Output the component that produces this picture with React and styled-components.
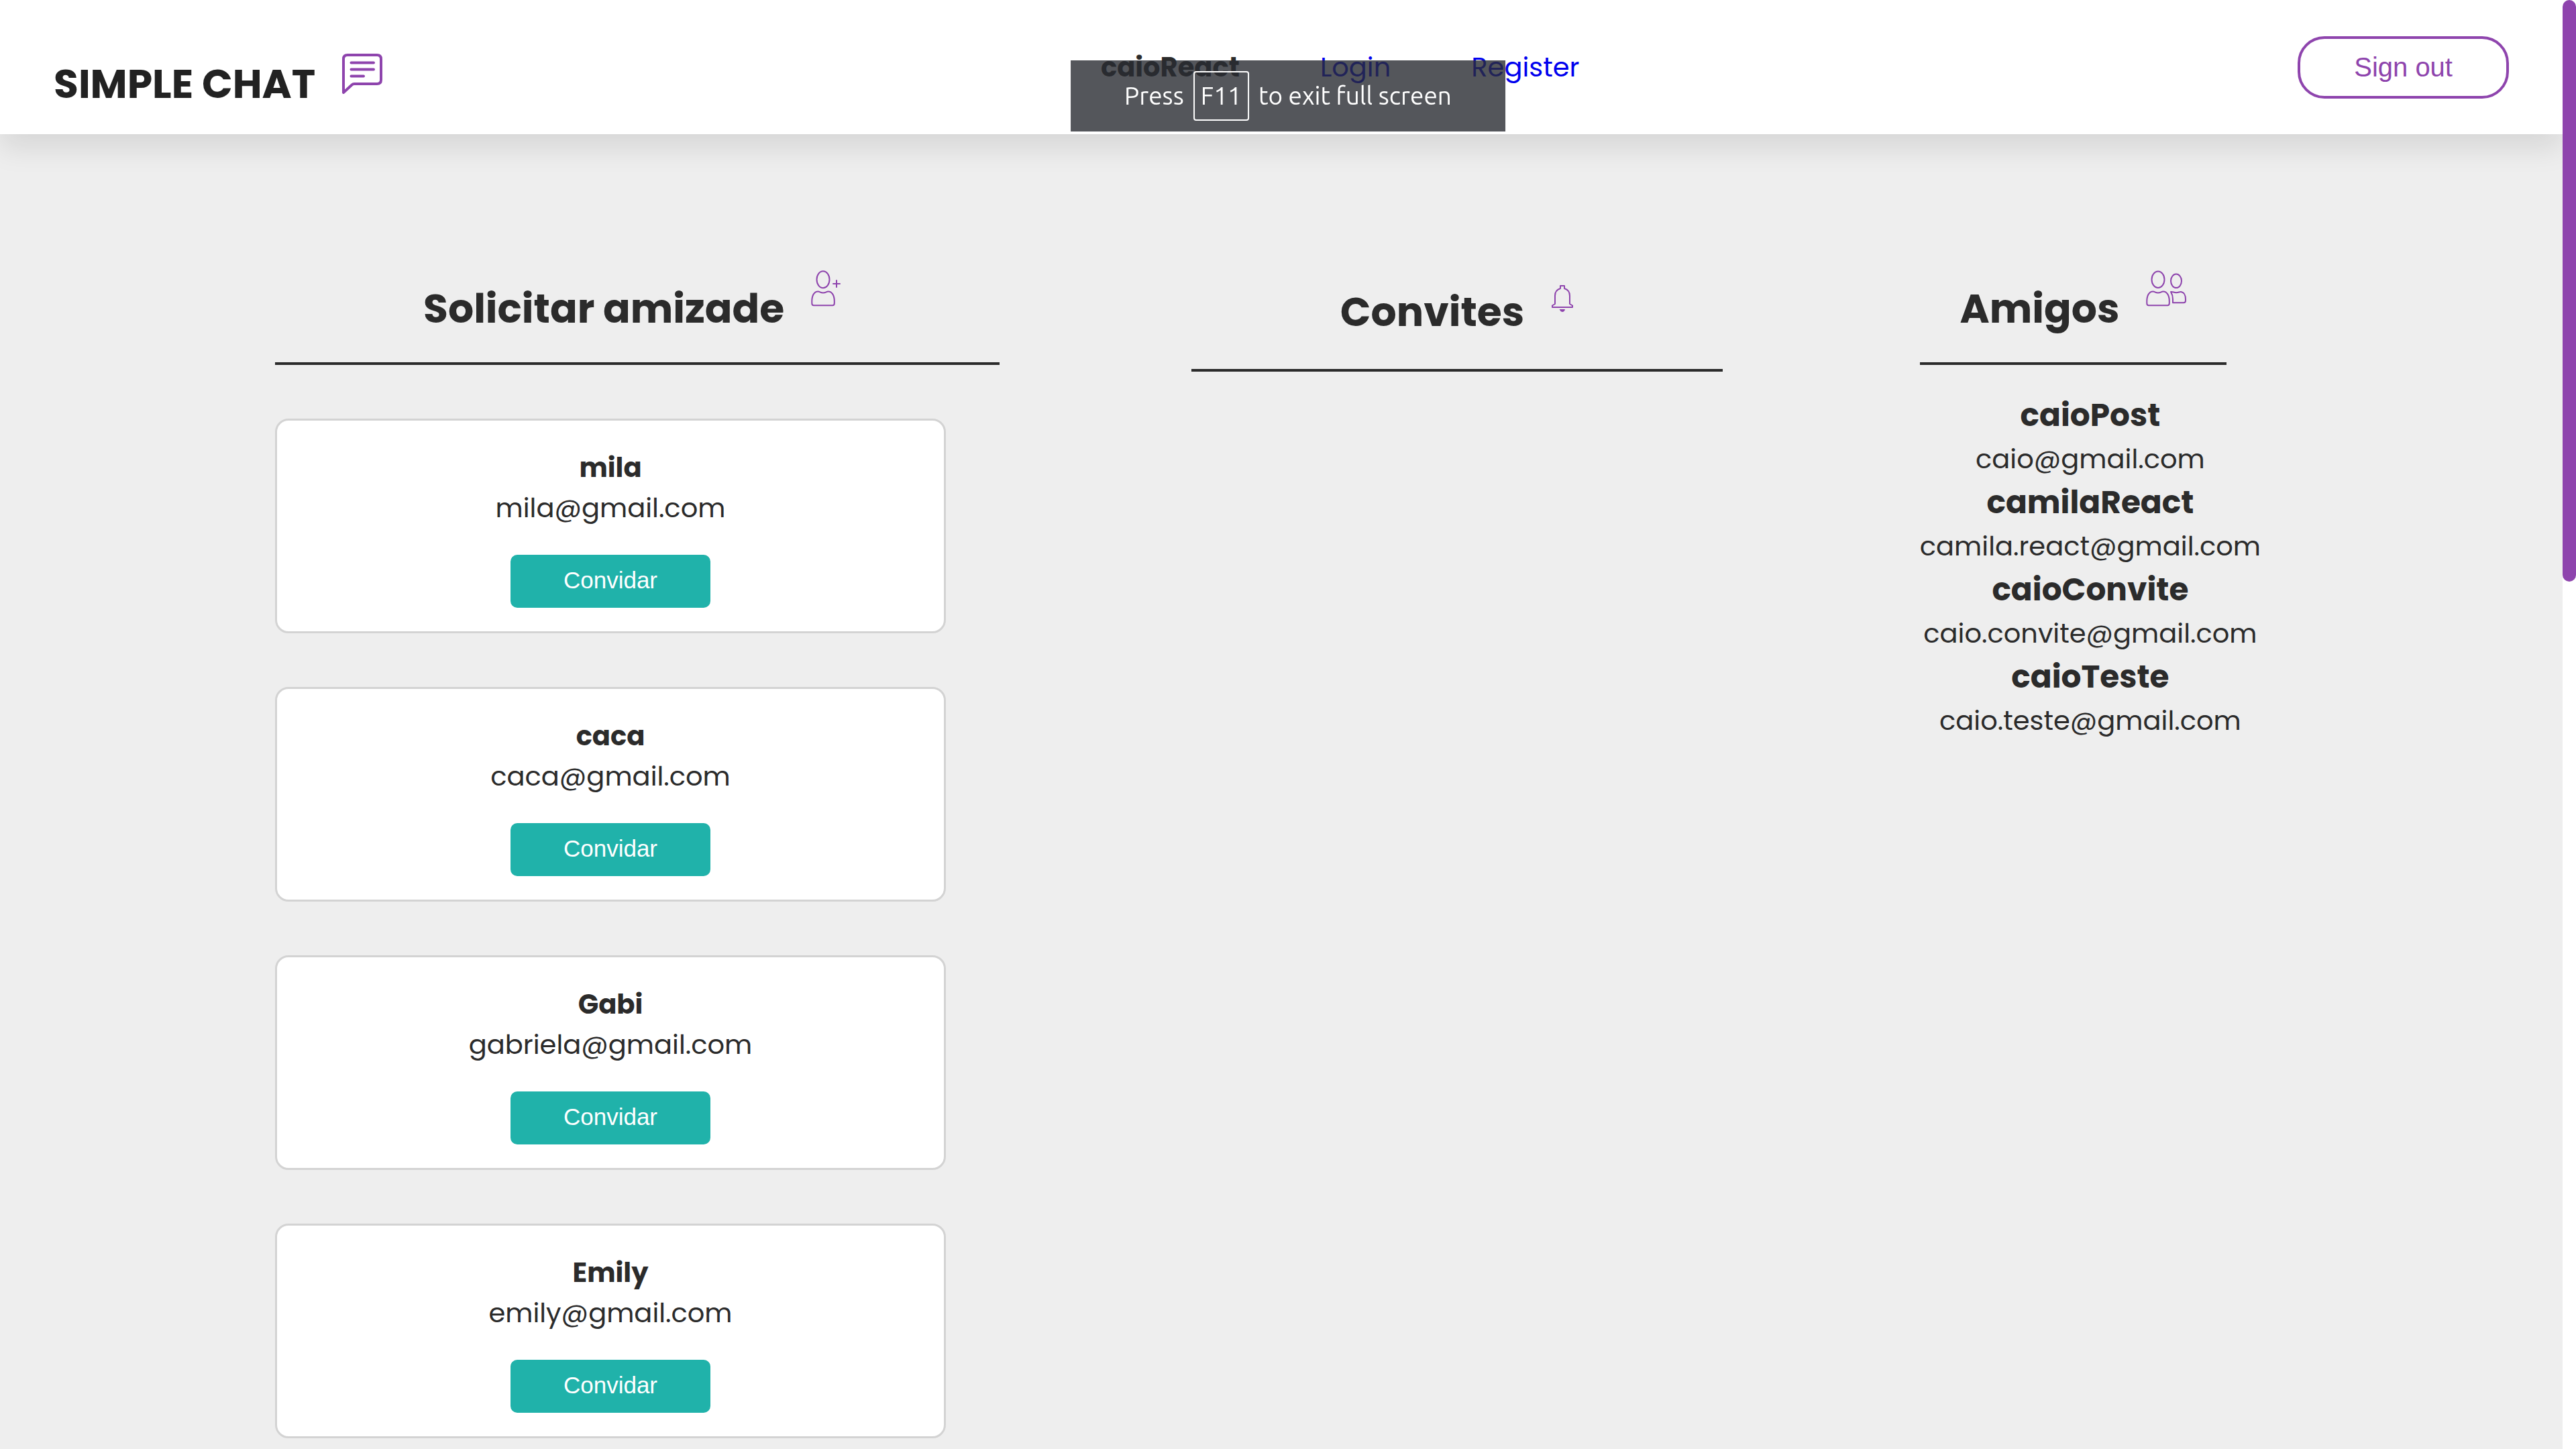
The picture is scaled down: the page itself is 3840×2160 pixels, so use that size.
import React from "react";
import styled, { createGlobalStyle } from "styled-components";

const sans = `Poppins, Inter, "Open Sans", sans-serif`;
const ui = `"Liberation Sans", Arial, sans-serif`;

const GlobalStyle = createGlobalStyle`
  *, *::before, *::after { box-sizing: border-box; margin: 0; padding: 0; }
  body { background: #eee; color: #2b2b2b; font: 400 40px/60px ${sans}; overflow: hidden; }
`;

const Screen = styled.div`
  display: flex;
  height: 100vh;
`;

const Page = styled.div`
  flex: 1;
  min-width: 0;
  overflow: hidden;
`;

const ScrollTrack = styled.div`
  position: relative;
  z-index: 2;
  flex: 0 0 20px;
  background: #fff;
`;

const ScrollThumb = styled.div`
  height: 40.15%;
  border-radius: 10px;
  background: #8e44ad;
`;

const Header = styled.header`
  display: flex;
  align-items: center;
  justify-content: space-between;
  height: 200px;
  padding: 0 80px;
  background: #fff;
  box-shadow: 0 20px 40px rgba(0, 0, 0, 0.1);
`;

const Brand = styled.h1`
  display: flex;
  gap: 40px;
  padding-top: 30px;
  color: #222;
  font-size: 60px;
  line-height: 90px;
`;

const BrandName = styled.span`
  padding-top: 20px;
`;

const Icon = styled.svg`
  display: block;
  flex: none;
  width: ${(p) => p.$width || 60}px;
  height: 60px;
  fill: none;
  stroke: #8e44ad;
  stroke-width: ${(p) => p.$stroke || 2};
  stroke-linecap: round;
  stroke-linejoin: round;
`;

const BrandIcon = styled(Icon)`
  margin-top: 20px;
`;

const Nav = styled.nav`
  display: flex;
  align-items: center;
  gap: 120px;
`;

const NavLink = styled.a`
  color: #0000ee;
  text-decoration: none;
`;

const SignOut = styled.button`
  padding: 20px 80px;
  border: 4px solid #8e44ad;
  border-radius: 40px;
  background: #fff;
  color: #8e44ad;
  font: 400 40px/45px ${ui};
`;

const FullScreenHint = styled.div`
  position: fixed;
  z-index: 3;
  top: 90px;
  left: 50%;
  display: flex;
  align-items: center;
  gap: 14px;
  height: 106px;
  padding: 0 80px;
  transform: translateX(-50%);
  background: rgba(41, 44, 50, 0.8);
  color: #fff;
  font: 400 37px/70px "Ubuntu", "Noto Sans", sans-serif;
  white-space: nowrap;
`;

const Key = styled.kbd`
  padding: 0 9px;
  border: 2px solid #fff;
  border-radius: 4px;
  font: inherit;
`;

const Columns = styled.main`
  display: grid;
  grid-template-columns: 1081fr 800fr 507fr;
  column-gap: 286px;
  padding: 200px 450px 80px 410px;
`;

const ColumnHead = styled.div`
  display: flex;
  justify-content: center;
  gap: 40px;
  width: ${(p) => p.$rule};
  height: ${(p) => (p.$tall ? 154 : 144)}px;
  padding-top: ${(p) => (p.$tall ? 20 : 0)}px;
  border-bottom: 4px solid #2b2b2b;
`;

const Title = styled.h2`
  padding-top: ${(p) => (p.$tall ? 0 : 15)}px;
  font-size: 60px;
  line-height: 90px;
  white-space: nowrap;
`;

const CardList = styled.ul`
  display: grid;
  gap: 80px;
  width: 1000px;
  max-width: 100%;
  padding-top: 80px;
  list-style: none;
`;

const Card = styled.li`
  display: flex;
  flex-direction: column;
  align-items: center;
  padding: 40px 40px 35px;
  border: 3px solid #d3d3d3;
  border-radius: 20px;
  background: #fff;
`;

const Invite = styled.button`
  margin-top: 40px;
  padding: 18px 79px 22px;
  border: 0;
  border-radius: 10px;
  background: #20b2aa;
  color: #fff;
  font: 400 35px/39px ${ui};
`;

const FriendList = styled.ul`
  padding-top: 40px;
  list-style: none;
  text-align: center;
`;

const FriendName = styled.h3`
  font-size: 47px;
  line-height: 70px;
`;

const requests = [
  ["mila", "mila@gmail.com"],
  ["caca", "caca@gmail.com"],
  ["Gabi", "gabriela@gmail.com"],
  ["Emily", "emily@gmail.com"],
];

const friends = [
  ["caioPost", "caio@gmail.com"],
  ["camilaReact", "camila.react@gmail.com"],
  ["caioConvite", "caio.convite@gmail.com"],
  ["caioTeste", "caio.teste@gmail.com"],
];

export default function App() {
  return (
    <>
      <GlobalStyle />
      <Screen>
        <Page>
          <Header>
            <Brand>
              <BrandName>SIMPLE CHAT</BrandName>
              <BrandIcon viewBox="0 0 60 60" $stroke={4} aria-hidden="true">
                <path d="M2 58V8Q2 2 8 2H52Q58 2 58 8V39Q58 45 52 45H18Q16 45 14.500 46.500Z" />
                <path d="M13.500 13.500H47M13.500 23.500H47M13.500 33.500H32" />
              </BrandIcon>
            </Brand>
            <Nav>
              <strong>caioReact</strong>
              <NavLink href="#login">Login</NavLink>
              <NavLink href="#register">Register</NavLink>
            </Nav>
            <SignOut type="button">Sign out</SignOut>
          </Header>
          <Columns>
            <section>
              <ColumnHead $rule="100%">
                <Title>Solicitar amizade</Title>
                <Icon viewBox="0 0 60 60" aria-hidden="true">
                  <ellipse cx="18" cy="16.700" rx="9.500" ry="12.500" />
                  <path d="M4 55.300Q1.300 55.300 1.300 52V49C1.300 40 5 34.500 10.500 34.500C13 34.500 14 36.500 18 36.500C22 36.500 23 34.500 25.500 34.500C31 34.500 34.800 40 34.800 49V52Q34.800 55.300 32 55.300Z" />
                  <path d="M33 23H43M38 18V28" />
                </Icon>
              </ColumnHead>
              <CardList>
                {requests.map(([name, email]) => (
                  <Card key={email}>
                    <strong>{name}</strong>
                    <p>{email}</p>
                    <Invite type="button">Convidar</Invite>
                  </Card>
                ))}
              </CardList>
            </section>
            <section>
              <ColumnHead $rule="99%" $tall>
                <Title $tall>Convites</Title>
                <Icon viewBox="0 0 34 60" $width={34} aria-hidden="true">
                  <path d="M14 10V6H20V10C25 11.500 28 15.500 28 21V33L32 35.500V38H2V35.500L6 33V21C6 15.500 9 11.500 14 10Z" />
                  <path d="M13.500 41.500H20.500Q20 44.500 17 44.500Q14 44.500 13.500 41.500Z" fill="#8e44ad" strokeWidth="1" />
                </Icon>
              </ColumnHead>
            </section>
            <section>
              <ColumnHead $rule="90%">
                <Title>Amigos</Title>
                <Icon viewBox="0 0 60 60" aria-hidden="true">
                  <ellipse cx="18" cy="16.700" rx="9.500" ry="12.200" />
                  <path d="M4 55.300Q1.300 55.300 1.300 52V49C1.300 40 5 34.500 10.500 34.500C13 34.500 14 36.500 18 36.500C22 36.500 23 34.500 25.500 34.500C31 34.500 34.800 40 34.800 49V52Q34.800 55.300 32 55.300Z" />
                  <ellipse cx="45" cy="18.800" rx="8" ry="10.200" />
                  <path d="M37 35C40 34.500 41.500 36.200 45 36.200C48.500 36.200 50 34.800 52 35C56.500 35.500 59 40 59 46V48Q59 51.300 56 51.300H40V46Q40 40 37 35Z" />
                </Icon>
              </ColumnHead>
              <FriendList>
                {friends.map(([name, email]) => (
                  <li key={email}>
                    <FriendName>{name}</FriendName>
                    <p>{email}</p>
                  </li>
                ))}
              </FriendList>
            </section>
          </Columns>
        </Page>
        <ScrollTrack aria-hidden="true">
          <ScrollThumb />
        </ScrollTrack>
      </Screen>
      <FullScreenHint>
        <span>Press</span>
        <Key>F11</Key>
        <span>to exit full screen</span>
      </FullScreenHint>
    </>
  );
}
